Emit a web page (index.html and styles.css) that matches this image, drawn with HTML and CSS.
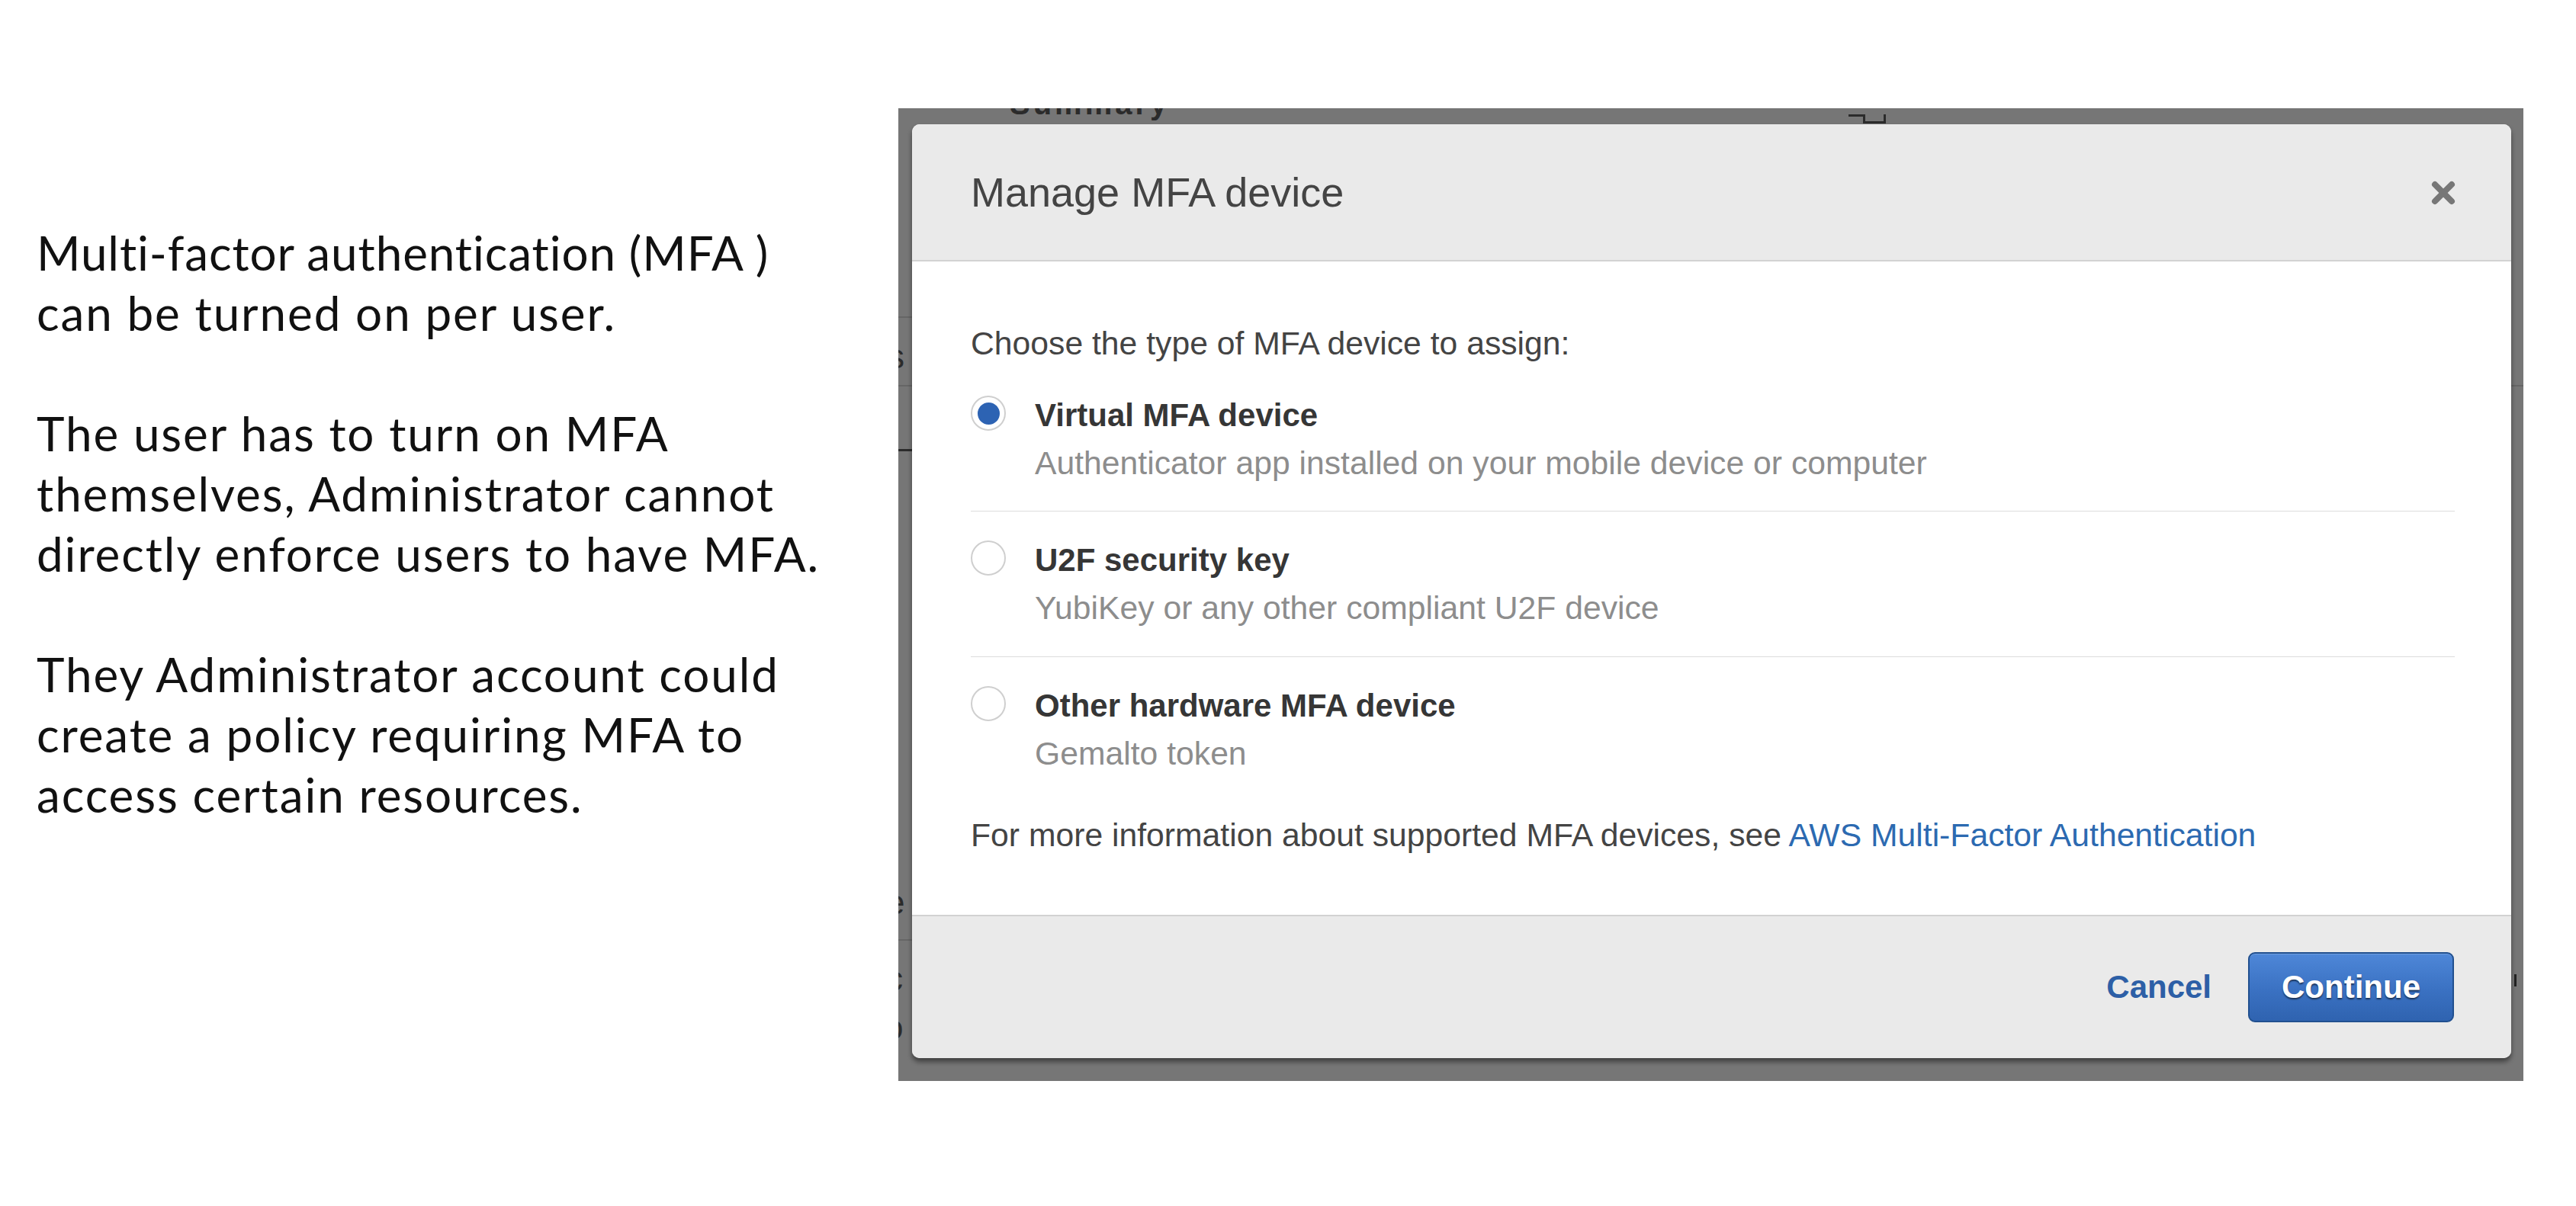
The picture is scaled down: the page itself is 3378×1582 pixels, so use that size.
FILE: index.html
```html
<!DOCTYPE html>
<html lang="en">
<head>
<meta charset="utf-8">
<title>Manage MFA device</title>
<link rel="stylesheet" href="styles.css">
</head>
<body>
<div class="page">
  <div class="notes">
    <p><span class="tight">Multi-factor authentication (MFA )</span><br>can be turned on per user.</p>
    <p>The user has to turn on MFA<br>themselves, Administrator cannot<br>directly enforce users to have MFA.</p>
    <p>They Administrator account could<br>create a policy requiring MFA to<br>access certain resources.</p>
  </div>

  <div class="shot">
    <span class="under under-top">Summary</span>
    <span class="under-tab"></span>
    <span class="under under-s">s</span>
    <span class="under-line under-l1"></span>
    <span class="under-line under-l2"></span>
    <span class="under-line under-l3"></span>
    <span class="under under-e">e</span>
    <span class="under-line under-l4"></span>
    <span class="under under-c">c</span>
    <span class="under under-o">o</span>
    <span class="under-line under-r1"></span>
    <span class="under-mark"></span>

    <div class="modal">
      <div class="modal-head">
        <h2 class="modal-title">Manage MFA device</h2>
        <button class="close" aria-label="Close">
          <svg width="34" height="32" viewBox="0 0 34 32"><path d="M6 5 L28 27 M28 5 L6 27" stroke="#777" stroke-width="8" stroke-linecap="round"/></svg>
        </button>
      </div>

      <div class="modal-body">
        <p class="lead">Choose the type of MFA device to assign:</p>
        <div class="options">
          <div class="option">
            <span class="radio checked"></span>
            <div class="option-text">
              <div class="option-label">Virtual MFA device</div>
              <div class="option-desc">Authenticator app installed on your mobile device or computer</div>
            </div>
          </div>
          <div class="option">
            <span class="radio"></span>
            <div class="option-text">
              <div class="option-label">U2F security key</div>
              <div class="option-desc">YubiKey or any other compliant U2F device</div>
            </div>
          </div>
          <div class="option">
            <span class="radio"></span>
            <div class="option-text">
              <div class="option-label">Other hardware MFA device</div>
              <div class="option-desc">Gemalto token</div>
            </div>
          </div>
        </div>
        <p class="more">For more information about supported MFA devices, see <a class="link" href="#">AWS Multi-Factor Authentication</a></p>
      </div>

      <div class="modal-foot">
        <a class="cancel" href="#">Cancel</a>
        <button class="primary">Continue</button>
      </div>
    </div>
  </div>
</div>
</body>
</html>
```

FILE: styles.css
```css
* { box-sizing: border-box; }

html, body {
  margin: 0;
  padding: 0;
  background: #ffffff;
}

.page {
  display: flex;
  align-items: flex-start;
  width: 3378px;
  height: 1582px;
}

/* left explanatory notes */
.notes {
  flex: 0 0 1178px;
  padding: 292px 0 0 48px;
  font-family: Lato, "Open Sans", sans-serif;
  font-size: 62px;
  line-height: 79px;
  letter-spacing: 1.9px;
  color: #111111;
  white-space: nowrap;
}
.notes p {
  margin: 0 0 79px 0;
}
.notes .tight {
  letter-spacing: 0.9px;
}

/* screenshot region (dimmed page behind modal) */
.shot {
  position: relative;
  overflow: hidden;
  flex: 0 0 2131px;
  height: 1276px;
  margin-top: 142px;
  padding: 21px 16px 30px 18px;
  background: #767676;
}

.under {
  position: absolute;
  font-family: "Liberation Sans", Arial, sans-serif;
  font-size: 40px;
  line-height: 40px;
  color: #2b2b2b;
}
.under-top { left: 146px; top: -26px; font-weight: bold; letter-spacing: 4px; }
.under-s { left: -14px; top: 306px; font-size: 44px; }
.under-e { left: -16px; top: 1022px; font-size: 44px; }
.under-c { left: -16px; top: 1122px; font-size: 44px; }
.under-o { left: -18px; top: 1186px; font-size: 44px; }
.under-line {
  position: absolute;
  height: 2px;
  background: #666666;
}
.under-l1 { left: 0; top: 273px; width: 18px; }
.under-l2 { left: 0; top: 363px; width: 18px; }
.under-l3 { left: 0; top: 447px; width: 18px; height: 3px; background: #2b2b2b; }
.under-l4 { left: 0; top: 1090px; width: 18px; }
.under-r1 { right: 0; top: 363px; width: 16px; }
.under-mark {
  position: absolute;
  right: 9px;
  top: 1136px;
  width: 3px;
  height: 16px;
  background: #222222;
}
.under-tab {
  position: absolute;
  left: 1265px;
  top: 8px;
  width: 30px;
  height: 12px;
  border: 3px solid #2b2b2b;
  border-top: none;
}
.under-tab::before {
  content: "";
  position: absolute;
  left: -22px;
  top: 0;
  width: 22px;
  height: 3px;
  background: #2b2b2b;
}

/* modal */
.modal {
  position: relative;
  z-index: 1;
  height: 1225px;
  background: #ffffff;
  border-radius: 10px;
  box-shadow: 0 5px 6px rgba(0, 0, 0, 0.45);
  font-family: "Liberation Sans", Arial, Helvetica, sans-serif;
  display: flex;
  flex-direction: column;
  overflow: hidden;
}

.modal-head {
  flex: 0 0 180px;
  display: flex;
  align-items: center;
  justify-content: space-between;
  padding: 0 72px 0 77px;
  background: #eaeaea;
  border-bottom: 2px solid #d2d2d2;
}
.modal-title {
  margin: 0;
  font-size: 54px;
  font-weight: normal;
  color: #444444;
}
.close {
  display: flex;
  padding: 0;
  margin: 2px 0 0 0;
  border: none;
  background: none;
}

.modal-body {
  flex: 1 1 auto;
  padding: 77px 74px 75px 77px;
  font-size: 42.7px;
  line-height: 60px;
  color: #444444;
}
.lead {
  margin: 0 0 35px 0;
}
.option {
  display: flex;
  align-items: flex-start;
  gap: 38px;
  padding: 34px 0 34px 0;
  border-bottom: 1px solid #dddddd;
}
.option:first-child { padding-top: 0; padding-bottom: 33px; }
.option:last-child { border-bottom: none; padding-bottom: 0; }

.radio {
  flex: 0 0 46px;
  height: 46px;
  margin-top: 4px;
  border: 2px solid #cfcfcf;
  border-radius: 50%;
  background: #ffffff;
  display: flex;
  align-items: center;
  justify-content: center;
}
.radio.checked::after {
  content: "";
  width: 29px;
  height: 29px;
  border-radius: 50%;
  background: #2d63b3;
}
.option-label {
  font-size: 42px;
  font-weight: bold;
  color: #363636;
}
.option-desc {
  margin-top: 2px;
  color: #8d8d8d;
}
.more {
  margin: 47px 0 0 0;
}
.link {
  color: #2c6ab1;
  text-decoration: none;
}

.modal-foot {
  flex: 0 0 188px;
  display: flex;
  align-items: center;
  justify-content: flex-end;
  gap: 48px;
  padding: 0 75px 0 0;
  background: #eaeaea;
  border-top: 2px solid #d2d2d2;
}
.cancel {
  font-size: 42px;
  font-weight: bold;
  color: #2d5fa6;
  text-decoration: none;
}
.primary {
  height: 92px;
  padding: 0 42px;
  border: 2px solid #21508f;
  border-radius: 9px;
  background: linear-gradient(#4e87d8, #3a71c2 55%, #2f63b0);
  color: #ffffff;
  font-family: "Liberation Sans", Arial, sans-serif;
  font-size: 42px;
  font-weight: bold;
  text-shadow: 0 2px 2px rgba(0, 0, 0, 0.55);
  box-shadow: inset 0 1px 0 rgba(255, 255, 255, 0.2);
}
```
